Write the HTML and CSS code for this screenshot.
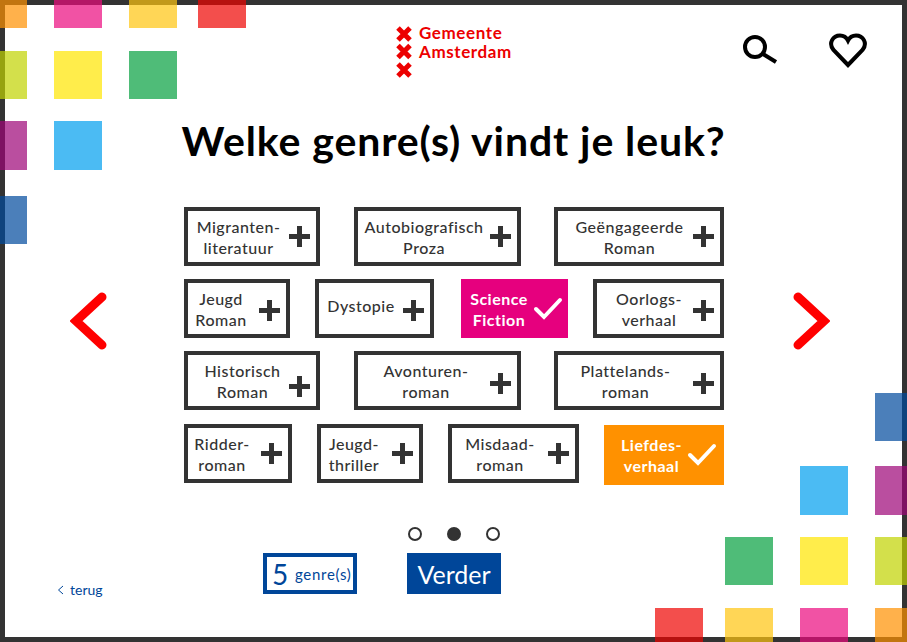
FILE: index.html
```html
<!DOCTYPE html>
<html lang="nl">
<head>
    <meta charset="UTF-8">
    <title>Welke genre(s)</title>
    <link rel="stylesheet" href="styles.css">
</head>
<body>

<div class="page">
    <div class="frame">
        <header class="header">
            <div class="logo">
                <svg class="crosses" width="16" height="52" viewBox="0 0 16 52">
                    <path d="M2 2 L14 14 M14 2 L2 14 M2 19.500 L14 31.500 M14 19.500 L2 31.500 M2 38 L14 50 M14 38 L2 50"/>
                </svg>
                <div class="logo-text">Gemeente<br>Amsterdam</div>
            </div>
            <div class="tools">
                <svg class="search" width="38" height="36" viewBox="0 0 38 36">
                    <circle cx="13" cy="14" r="10"/>
                    <path d="M21 21 L34 29"/>
                </svg>
                <svg class="heart" width="38" height="36" viewBox="0 0 38 36">
                    <path d="M19 32 L4.500 17 C-1 10 4 2.500 11 2.500 C14.500 2.500 17.500 4.500 19 7.500 C20.500 4.500 23.500 2.500 27 2.500 C34 2.500 39 10 33.500 17 Z"/>
                </svg>
            </div>
        </header>

        <h1 class="title">Welke genre(s) vindt je leuk?</h1>

        <div class="main">
            <svg class="arrow arrow-left" width="40" height="60" viewBox="0 0 40 60"><path d="M32 6 L6 30 L32 54"/></svg>

            <div class="options">
                <div class="row row-1">
                    <div class="genre w136"><span>Migranten-<br>literatuur</span><i class="plus"></i></div>
                    <div class="genre w167 ml34"><span>Autobiografisch<br>Proza</span><i class="plus"></i></div>
                    <div class="genre w170 ml33"><span class="nudge-r">Geëngageerde<br>Roman</span><i class="plus"></i></div>
                </div>
                <div class="row row-2">
                    <div class="genre w106"><span class="nudge-l">Jeugd<br>Roman</span><i class="plus"></i></div>
                    <div class="genre w119 ml25"><span class="raise">Dystopie</span><i class="plus"></i></div>
                    <div class="genre w107 ml27 picked pink"><span>Science<br>Fiction</span>
                        <svg class="check" width="30" height="24" viewBox="0 0 30 24"><path d="M3 12 L11 20 L27 3"/></svg>
                    </div>
                    <div class="genre w131 ml25"><span class="nudge-r">Oorlogs-<br>verhaal</span><i class="plus"></i></div>
                </div>
                <div class="row row-3">
                    <div class="genre w136"><span class="nudge-r">Historisch<br>Roman</span><i class="plus plus-low"></i></div>
                    <div class="genre w167 ml34"><span class="nudge-r-small">Avonturen-<br>roman</span><i class="plus"></i></div>
                    <div class="genre w170 ml33"><span>Plattelands-<br>roman</span><i class="plus"></i></div>
                </div>
                <div class="row row-4">
                    <div class="genre w108"><span class="nudge-l">Ridder-<br>roman</span><i class="plus"></i></div>
                    <div class="genre w106 ml25"><span class="nudge-l">Jeugd-<br>thriller</span><i class="plus"></i></div>
                    <div class="genre w131 ml25"><span>Misdaad-<br>roman</span><i class="plus"></i></div>
                    <div class="genre w120 ml25 picked orange"><span class="nudge-r">Liefdes-<br>verhaal</span>
                        <svg class="check" width="30" height="24" viewBox="0 0 30 24"><path d="M3 12 L11 20 L27 3"/></svg>
                    </div>
                </div>
            </div>

            <svg class="arrow arrow-right" width="40" height="60" viewBox="0 0 40 60"><path d="M8 6 L34 30 L8 54"/></svg>
        </div>

        <div class="dots">
            <span class="dot"></span>
            <span class="dot active"></span>
            <span class="dot"></span>
        </div>

        <div class="footer">
            <a class="back">
                <svg width="7" height="10" viewBox="0 0 7 10"><path d="M6 1 L1.500 5 L6 9"/></svg>
                terug
            </a>
            <div class="counter"><b>5</b> genre(s)</div>
            <button class="next">Verder</button>
        </div>
    </div>

    <svg class="deco" width="907" height="642" viewBox="0 0 907 642">
        <rect x="0" y="0" width="27" height="28" fill="#ff9100"/>
        <rect x="54" y="0" width="48" height="28" fill="#ec0a7e"/>
        <rect x="129" y="0" width="48" height="28" fill="#ffc510"/>
        <rect x="198" y="0" width="48" height="28" fill="#ee0401"/>
        <rect x="0" y="51" width="27" height="48" fill="#c1d300"/>
        <rect x="54" y="51" width="48" height="48" fill="#ffe600"/>
        <rect x="129" y="51" width="48" height="48" fill="#05a13f"/>
        <rect x="0" y="121" width="27" height="49" fill="#9e0477"/>
        <rect x="54" y="121" width="48" height="49" fill="#009fee"/>
        <rect x="0" y="196" width="27" height="48" fill="#004a9d"/>

        <rect x="875" y="393" width="32" height="48" fill="#004a9d"/>
        <rect x="800" y="466" width="48" height="49" fill="#009fee"/>
        <rect x="875" y="466" width="32" height="49" fill="#9e0477"/>
        <rect x="725" y="537" width="48" height="48" fill="#05a13f"/>
        <rect x="800" y="537" width="48" height="48" fill="#ffe600"/>
        <rect x="875" y="537" width="32" height="48" fill="#c1d300"/>
        <rect x="655" y="608" width="48" height="34" fill="#ee0401"/>
        <rect x="725" y="608" width="48" height="34" fill="#ffc510"/>
        <rect x="800" y="608" width="48" height="34" fill="#ec0a7e"/>
        <rect x="875" y="608" width="32" height="34" fill="#ff9100"/>
    </svg>
</div>

</body>
</html>
```

FILE: styles.css
```css
body {
    margin: 0;
    font-family: 'Lato', 'Noto Sans', sans-serif;
    background: #fff;
    color: #333;
}

.page {
    position: relative;
    width: 907px;
    height: 642px;
    overflow: hidden;
}

.frame {
    box-sizing: border-box;
    width: 907px;
    height: 642px;
    border: 5px solid #333;
    display: flex;
    flex-direction: column;
}

.deco {
    position: absolute;
    left: 0;
    top: 0;
    opacity: 0.7;
    pointer-events: none;
}

/* Header */
.header {
    display: flex;
    height: 76px;
    padding: 21px 0 0 391px;
    box-sizing: border-box;
}

.logo {
    display: flex;
    gap: 7px;
}

.crosses path {
    fill: none;
    stroke: #ec0000;
    stroke-width: 5;
}

.logo-text {
    color: #ec0000;
    font-size: 17px;
    line-height: 19px;
    font-weight: 700;
    letter-spacing: 0.6px;
    margin-top: -3px;
}

.tools {
    display: flex;
    gap: 49px;
    margin-left: auto;
    margin-right: 35px;
    margin-top: 7px;
}

.tools svg {
    fill: none;
    stroke: #000;
    stroke-width: 4;
}

.title {
    margin: 36px 0 0;
    text-align: center;
    color: #000;
    font-size: 41px;
    line-height: 48px;
    font-weight: 700;
    letter-spacing: 0.9px;
    height: 48px;
}

/* Genre buttons */
.main {
    display: flex;
    align-items: flex-start;
    margin-top: 42px;
    padding-left: 65px;
}

.arrow {
    fill: none;
    stroke: #f00;
    stroke-width: 9;
    stroke-linecap: round;
    flex: none;
    margin-top: 84px;
}

.arrow-left {
    margin-right: 74px;
}

.arrow-right {
    margin-left: 66px;
}

.options {
    width: 540px;
    flex: none;
    display: flex;
    flex-direction: column;
    gap: 13px;
}

.row {
    display: flex;
}

.row-4 {
    margin-top: 1px;
}

.genre {
    box-sizing: border-box;
    height: 59px;
    border: 4px solid #333;
    display: flex;
    align-items: center;
    padding-right: 6px;
    font-size: 16px;
    line-height: 21px;
    font-weight: 500;
    letter-spacing: 0.5px;
}

.genre span {
    flex: 1;
    text-align: center;
}

.genre .nudge-r { padding-left: 8px; }
.genre .nudge-r-small { padding-left: 4px; }
.genre .nudge-l { padding-right: 5px; }
.genre .raise { padding-bottom: 6px; }

.plus {
    flex: none;
    position: relative;
    width: 21px;
    height: 21px;
}

.plus::before,
.plus::after {
    content: "";
    position: absolute;
    background: #333;
}

.plus::before {
    left: 8px;
    top: 0;
    width: 5px;
    height: 21px;
}

.plus::after {
    left: 0;
    top: 8px;
    width: 21px;
    height: 5px;
}

.row-2 .plus { margin-top: 3px; }
.row-3 .plus { margin-top: 5px; }
.row-3 .plus-low { margin-top: 11px; }

.w106 { width: 106px; }
.w107 { width: 107px; }
.w108 { width: 108px; }
.w119 { width: 119px; }
.w120 { width: 120px; }
.w131 { width: 131px; }
.w136 { width: 136px; }
.w167 { width: 167px; }
.w170 { width: 170px; }

.ml25 { margin-left: 25px; }
.ml27 { margin-left: 27px; }
.ml33 { margin-left: 33px; }
.ml34 { margin-left: 34px; }

.picked {
    border: 0;
    color: #fff;
    font-weight: 700;
    padding-left: 4px;
    padding-right: 5px;
}

.pink { background: #e6007e; }
.orange { background: #ff9100; height: 60px; margin-top: 1px; padding-right: 7px; }

.check {
    flex: none;
    fill: none;
    stroke: #fff;
    stroke-width: 4;
    stroke-linecap: round;
}

/* Pager and footer */
.dots {
    display: flex;
    justify-content: center;
    gap: 25px;
    margin-top: 42px;
}

.dot {
    box-sizing: border-box;
    width: 14px;
    height: 14px;
    border: 2px solid #333;
    border-radius: 50%;
}

.dot.active {
    background: #333;
}

.footer {
    display: flex;
    align-items: flex-end;
    padding-left: 52px;
    margin-top: 12px;
    color: #004699;
}

.back {
    display: flex;
    align-items: center;
    gap: 6px;
    font-size: 14px;
    line-height: 18px;
    width: 206px;
    margin-bottom: -5px;
}

.back svg {
    fill: none;
    stroke: #004699;
    stroke-width: 1;
}

.counter {
    box-sizing: border-box;
    width: 94px;
    height: 41px;
    border: 4px solid #004699;
    display: flex;
    align-items: center;
    padding-left: 5px;
    gap: 6px;
    font-size: 15px;
    letter-spacing: 0.7px;
}

.counter b {
    font-size: 28px;
    font-weight: 400;
}

.next {
    width: 94px;
    height: 41px;
    margin-left: 50px;
    border: none;
    padding: 0;
    background: #004699;
    color: #fff;
    font-family: inherit;
    font-size: 25px;
}
```
